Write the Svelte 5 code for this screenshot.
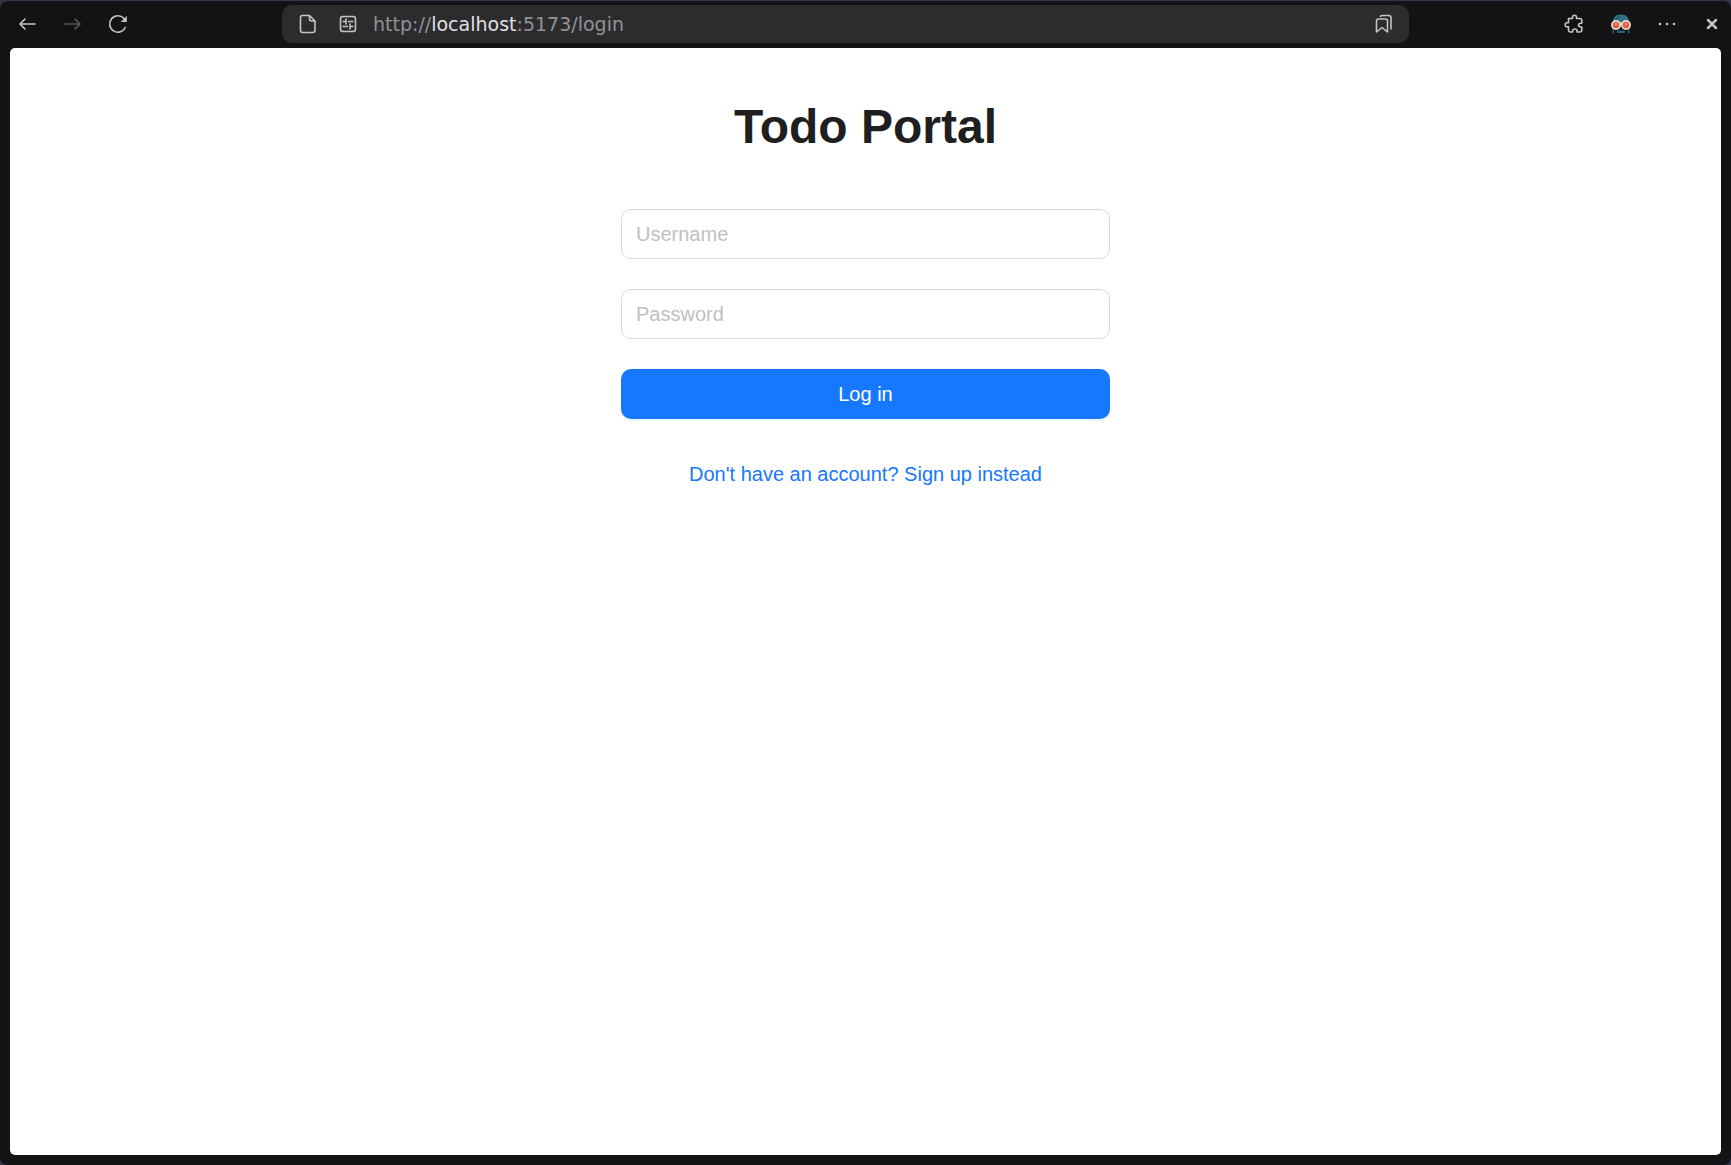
<script>
  let username = $state('');
  let password = $state('');
</script>

<div class="window">
  <header class="toolbar">
    <nav class="group" aria-label="Navigation">
      <button class="tool" aria-label="Back">
        <svg width="18" height="18" viewBox="0 0 18 18"><path d="M17 9H2M7 4 2 9l5 5" /></svg>
      </button>
      <button class="tool dim" aria-label="Forward" disabled>
        <svg width="18" height="18" viewBox="0 0 18 18"><path d="M2 9h15M12 4 17 9l-5 5" /></svg>
      </button>
      <button class="tool" aria-label="Reload">
        <svg width="20" height="20" viewBox="0 0 20 20">
          <path d="M17.300 13.500A8.200 8.200 0 1 1 16 4.500" />
          <path class="solid" d="M18.800 1.800V8H12.800L15.400 5.600 15 3.800 17 4Z" />
        </svg>
      </button>
    </nav>

    <div class="address">
      <svg width="18" height="20" viewBox="0 0 18 20">
        <path d="M3.500 1.500H10.500L16 7V16Q16 18.500 13.500 18.500H3.500Q1.500 18.500 1.500 16V3.500Q1.500 1.500 3.500 1.500ZM10.500 1.500V5Q10.500 7 12.500 7H16" />
      </svg>
      <svg class="settings" width="18" height="18" viewBox="0 0 18 18">
        <rect x="1.500" y="1.500" width="15" height="15" rx="2.500" />
        <path d="M4 6.500H7M7 4V9M9.500 6.500H14M4 11.500H8.500M11 9V14M11 11.500H14" />
      </svg>
      <span class="url">http://<b>localhost</b>:5173/login</span>
      <button class="tool mark" aria-label="Bookmark">
        <svg width="18" height="20" viewBox="0 0 18 20">
          <path d="M1.500 18V7Q1.500 5 3.500 5H10.500Q12.500 5 12.500 7V18L7 13.500ZM5.500 2.500Q6 1.500 7.500 1.500H13.500Q16 1.500 16 4V15" />
        </svg>
      </button>
    </div>

    <div class="group end">
      <button class="tool" aria-label="Extensions">
        <svg width="20" height="20" viewBox="0 0 20 20">
          <path d="M4.500 4.500H8.500V3.200A2 2 0 0 1 12.500 3.200V4.500H15.500Q17.800 4.500 17.800 6.500V9.200H16.500A1.900 1.900 0 0 0 16.500 13H17.800V16Q17.800 18 15.800 18H13V17.200A2.200 2.200 0 0 0 8.600 17.200V18H6.500Q4.500 18 4.500 16V12.800H3.200A2 2 0 0 1 3.200 8.800H4.500Z" />
        </svg>
      </button>
      <button class="tool" aria-label="Profile">
        <svg class="avatar" width="20" height="20" viewBox="0 0 20 20">
          <path fill="#2f7081" d="M2 10Q1 0.500 10 0.500T18 10Z" />
          <path fill="#17515f" d="M4 7Q5 2 10 2L6 5V8Z" />
          <path fill="#236273" d="M1.500 13H3V19.500H1.500ZM17 13H18.500V19.500H17ZM6 16.500H14V19H6Z" />
          <circle cx="5" cy="11" r="5" fill="#ead8d0" />
          <circle cx="15" cy="11" r="5" fill="#ead8d0" />
          <path fill="#ead8d0" d="M8 8.500H12V11H8Z" />
          <circle cx="5" cy="11" r="3.200" fill="#dc5c43" />
          <circle cx="15" cy="11" r="3.200" fill="#dc5c43" />
          <circle cx="5" cy="10" r="1.500" fill="#f08a72" />
          <circle cx="15" cy="10" r="1.500" fill="#f08a72" />
        </svg>
      </button>
      <button class="tool" aria-label="Menu">
        <svg width="18" height="18" viewBox="0 0 18 18">
          <g class="solid"><circle cx="2" cy="9" r="1.300" /><circle cx="9" cy="9" r="1.300" /><circle cx="16" cy="9" r="1.300" /></g>
        </svg>
      </button>
      <button class="tool close" aria-label="Close">
        <svg width="12" height="12" viewBox="0 0 12 12"><path class="cross" d="M2 2l8 8M10 2l-8 8" /></svg>
      </button>
    </div>
  </header>

  <main class="page">
    <h1>Todo Portal</h1>
    <form class="login" onsubmit={(event) => event.preventDefault()}>
      <input type="text" placeholder="Username" aria-label="Username" bind:value={username} />
      <input type="password" placeholder="Password" aria-label="Password" bind:value={password} />
      <button class="submit" type="submit">Log in</button>
      <a href="/signup">Don't have an account? Sign up instead</a>
    </form>
  </main>
</div>

<style>
  :global(body) {
    margin: 0;
    background: #35354a;
  }

  .window {
    box-sizing: border-box;
    display: flex;
    flex-direction: column;
    min-height: 100vh;
    padding: 0 10px 10px;
    border-top: 1px solid #35354a;
    border-radius: 8px;
    background: #131315;
    font-family: "Liberation Sans", Arial, sans-serif;
  }

  .toolbar {
    display: grid;
    grid-template-columns: 272px 1fr 312px;
    align-items: center;
    height: 46px;
    margin-bottom: 1px;
  }

  .group {
    display: flex;
    align-items: center;
    gap: 27px;
    padding-left: 8px;
  }

  .end {
    justify-content: flex-end;
    padding: 0 3px 0 0;
  }

  .tool {
    display: flex;
    padding: 0;
    border: 0;
    background: none;
    color: #c4c4c4;
  }

  .dim {
    color: #555557;
  }

  .close {
    margin-left: 3px;
  }

  svg {
    display: block;
    flex: none;
    fill: none;
    stroke: currentColor;
    stroke-width: 1.6;
    stroke-linecap: round;
    stroke-linejoin: round;
  }

  .solid {
    fill: currentColor;
    stroke: none;
  }

  .avatar {
    stroke: none;
  }

  .cross {
    stroke-width: 2.5;
  }

  .address {
    display: flex;
    align-items: center;
    box-sizing: border-box;
    height: 38px;
    padding: 0 16px 0 17px;
    border-radius: 10px;
    background: #2c2c2e;
    color: #c4c4c4;
  }

  .settings {
    margin: 0 16px 0 22px;
  }

  .url {
    font-family: "DejaVu Sans", sans-serif;
    font-size: 19px;
    line-height: 24px;
    color: #929294;
  }

  .url b {
    font-weight: 400;
    color: #e0e0e0;
  }

  .mark {
    margin-left: auto;
  }

  .page {
    display: flex;
    flex: 1;
    flex-direction: column;
    align-items: center;
    gap: 52px;
    padding-top: 49px;
    border-radius: 5px;
    background: #fff;
  }

  h1 {
    margin: 0;
    font-size: 48px;
    line-height: 60px;
    color: #1f1f1f;
  }

  .login {
    display: flex;
    flex-direction: column;
    gap: 30px;
    width: 489px;
    max-width: 90%;
    font-size: 20px;
  }

  .login input,
  .submit {
    box-sizing: border-box;
    width: 100%;
    height: 50px;
    margin: 0;
    border-radius: 10px;
    font: inherit;
  }

  .login input {
    padding: 0 14px;
    border: 1px solid #d9d9d9;
    background: #fff;
    color: #1f1f1f;
  }

  .login input::placeholder {
    color: #bfbfbf;
    opacity: 1;
  }

  .submit {
    border: 0;
    background: #1677ff;
    box-shadow: 0 2px 0 #eaf5ff;
    color: #fff;
  }

  a {
    line-height: 50px;
    text-align: center;
    text-decoration: none;
    color: #1677ff;
  }
</style>
